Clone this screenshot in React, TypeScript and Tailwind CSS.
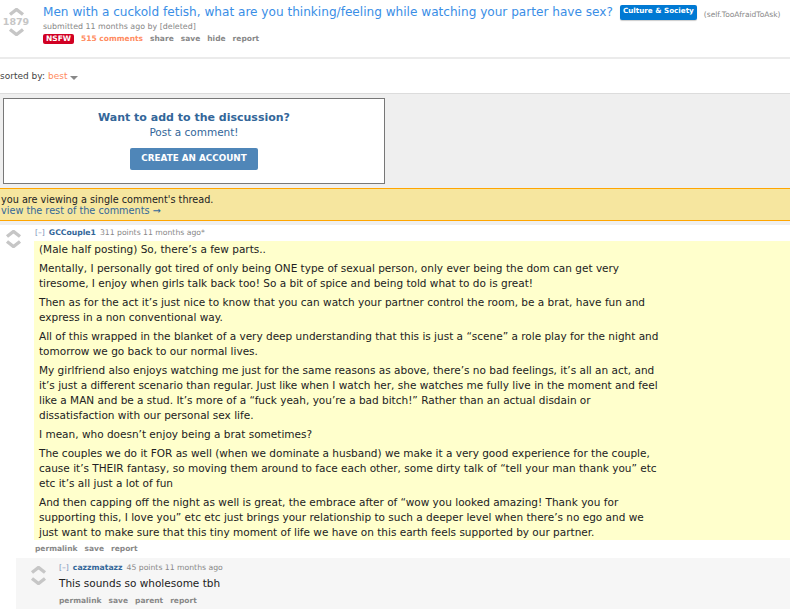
import React from 'react';

const paragraphs: string[][] = [
  ['(Male half posting) So, there’s a few parts..'],
  [
    'Mentally, I personally got tired of only being ONE type of sexual person, only ever being the dom can get very',
    'tiresome, I enjoy when girls talk back too! So a bit of spice and being told what to do is great!',
  ],
  [
    'Then as for the act it’s just nice to know that you can watch your partner control the room, be a brat, have fun and',
    'express in a non conventional way.',
  ],
  [
    'All of this wrapped in the blanket of a very deep understanding that this is just a “scene” a role play for the night and',
    'tomorrow we go back to our normal lives.',
  ],
  [
    'My girlfriend also enjoys watching me just for the same reasons as above, there’s no bad feelings, it’s all an act, and',
    'it’s just a different scenario than regular. Just like when I watch her, she watches me fully live in the moment and feel',
    'like a MAN and be a stud. It’s more of a “fuck yeah, you’re a bad bitch!” Rather than an actual disdain or',
    'dissatisfaction with our personal sex life.',
  ],
  ['I mean, who doesn’t enjoy being a brat sometimes?'],
  [
    'The couples we do it FOR as well (when we dominate a husband) we make it a very good experience for the couple,',
    'cause it’s THEIR fantasy, so moving them around to face each other, some dirty talk of “tell your man thank you” etc',
    'etc it’s all just a lot of fun',
  ],
  [
    'And then capping off the night as well is great, the embrace after of “wow you looked amazing! Thank you for',
    'supporting this, I love you” etc etc just brings your relationship to such a deeper level when there’s no ego and we',
    'just want to make sure that this tiny moment of life we have on this earth feels supported by our partner.',
  ],
];

function Arrow({ down = false }: { down?: boolean }) {
  return (
    <svg width="17" height="8" viewBox="0 0 17 8" className="block">
      <polyline
        points={down ? '2,1.5 8.5,6.5 15,1.5' : '2,6.5 8.5,1.5 15,6.5'}
        fill="none"
        stroke="#c6c6c6"
        strokeWidth="3.4"
        strokeLinejoin="miter"
      />
    </svg>
  );
}

function Buttons({ items }: { items: string[] }) {
  return (
    <div className="flex gap-[7px] text-[7.5px] leading-[10px] font-bold text-[#888]">
      {items.map(b => (
        <span key={b}>{b}</span>
      ))}
    </div>
  );
}

export default function App() {
  return (
    <div className="min-h-[609px] w-[790px] overflow-hidden bg-white font-['DejaVu_Sans',Verdana,sans-serif] text-[#222]">
      {/* post header */}
      <div className="flex h-[59px] border-b-2 border-[#ebebeb]">
        <div className="w-[32px] flex flex-col items-center pt-[8px]">
          <Arrow />
          <div className="text-[9.5px] leading-[12px] font-bold text-[#c6c6c6]">1879</div>
          <Arrow down />
        </div>
        <div className="pl-[11px] pt-[4px]">
          <div className="flex items-start whitespace-nowrap">
            <span className="text-[12.1px] leading-[16px] text-[#3a8ee6]">
              Men with a cuckold fetish, what are you thinking/feeling while watching your parter have sex?
            </span>
            <span className="ml-[7px] mt-[1px] rounded-[2px] bg-[#0079d3] px-[3px] pt-[1px] pb-[4px] text-[7.2px] leading-[10px] font-bold text-white shadow-[0_1px_1px_rgba(0,0,0,0.2)]">
              Culture &amp; Society
            </span>
            <span className="ml-[7px] mt-[6px] text-[7.5px] leading-[10px] text-[#888]">(self.TooAfraidToAsk)</span>
          </div>
          <div className="mt-[2px] text-[7.9px] leading-[10px] text-[#888] whitespace-nowrap">
            submitted 11 months ago by [deleted]
          </div>
          <div className="mt-[2px] flex items-center gap-[7px] whitespace-nowrap">
            <span className="rounded-[2px] bg-[#d10023] px-[3px] text-[7.5px] leading-[10px] font-bold text-white">NSFW</span>
            <span className="text-[7.5px] leading-[10px] font-bold text-[#ff8b60]">515 comments</span>
            <Buttons items={['share', 'save', 'hide', 'report']} />
          </div>
        </div>
      </div>

      {/* sort menu */}
      <div className="h-[35px] flex items-center pt-[2px] border-b border-[#dcdcdc] text-[9px] text-[#444] whitespace-nowrap">
        <span>sorted by:</span>
        <span className="ml-[3px] text-[#ff8b60]">best</span>
        <span className="ml-[3px] mt-[1px] border-x-[4px] border-t-[4px] border-x-transparent border-t-[#888]" />
      </div>

      {/* gray comment area top */}
      <div className="bg-[#efefef] pt-[4px] pb-[4px]">
        <div className="ml-[3px] w-[382px] h-[86px] border border-[#777] bg-white flex flex-col items-center text-[#369]">
          <div className="pt-[12px] text-[11px] leading-[14px] font-bold">Want to add to the discussion?</div>
          <div className="text-[10.5px] leading-[14px]">Post a comment!</div>
          <div className="mt-[9px] w-[128px] h-[22px] rounded-[2px] bg-[#4f86b8] flex items-center justify-center text-[8.8px] font-bold text-white">
            CREATE AN ACCOUNT
          </div>
        </div>
        <div className="mt-[4px] h-[33px] border-y border-[#ffa500] bg-[#f6e69f] pl-[1px] pt-[5px] text-[9.7px] leading-[11px] whitespace-nowrap">
          <div className="text-[#222]">you are viewing a single comment's thread.</div>
          <div className="text-[#369]">view the rest of the comments →</div>
        </div>
      </div>

      {/* comment */}
      <div className="flex">
        <div className="w-[34px] shrink-0 pl-[5px] pt-[5px] flex flex-col gap-[2px]">
          <Arrow />
          <Arrow down />
        </div>
        <div className="flex-1 pt-[3px]">
          <div className="pl-[1px] flex gap-[4px] text-[7.7px] leading-[10px] whitespace-nowrap">
            <span className="text-[#7a93b8]">[–]</span>
            <span className="font-bold text-[#369]">GCCouple1</span>
            <span className="text-[#888]">311 points 11 months ago*</span>
          </div>
          <div className="mt-[3px] bg-[#ffffcc] pl-[5px] pt-[1px] text-[10.5px] leading-[15px] text-[#222] whitespace-nowrap">
            {paragraphs.map((p, i) => (
              <div key={i} className={i > 0 ? 'mt-[4px]' : ''}>
                {p.map((line, j) => (
                  <div key={j}>{line}</div>
                ))}
              </div>
            ))}
          </div>
          <div className="mt-[4px] pl-[1px]">
            <Buttons items={['permalink', 'save', 'report']} />
          </div>
        </div>
      </div>

      {/* child comment */}
      <div className="ml-[16px] mt-[4px] bg-[#f6f6f6] flex pb-[6px]">
        <div className="w-[43px] shrink-0 pl-[14px] pt-[8px] flex flex-col gap-[3px]">
          <Arrow />
          <Arrow down />
        </div>
        <div className="pt-[5px]">
          <div className="flex gap-[4px] text-[7.7px] leading-[10px] whitespace-nowrap">
            <span className="text-[#7a93b8]">[–]</span>
            <span className="font-bold text-[#369]">cazzmatazz</span>
            <span className="text-[#888]">45 points 11 months ago</span>
          </div>
          <div className="mt-[3px] text-[10.5px] leading-[15px] text-[#222]">This sounds so wholesome tbh</div>
          <div className="mt-[5px]">
            <Buttons items={['permalink', 'save', 'parent', 'report']} />
          </div>
        </div>
      </div>
    </div>
  );
}
